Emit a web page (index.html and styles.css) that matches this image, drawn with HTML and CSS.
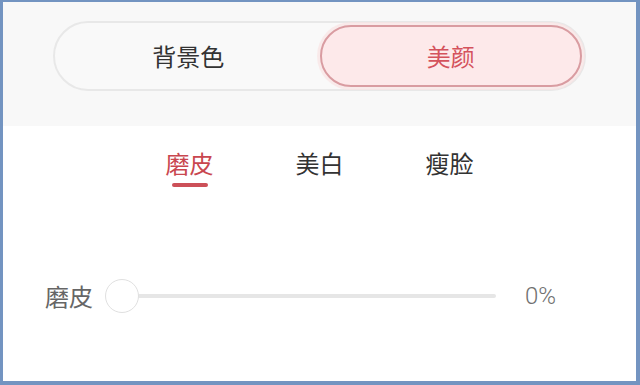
FILE: index.html
```html
<!DOCTYPE html>
<html lang="zh-CN">
<head>
<meta charset="utf-8">
<link rel="stylesheet" href="styles.css">
</head>
<body>
<div class="frame">
  <div class="top">
    <div class="switch">
      <div class="seg">背景色</div>
      <div class="seg active">美颜</div>
    </div>
  </div>
  <div class="panel">
    <div class="tabs">
      <div class="tab selected"><span class="tab-label">磨皮</span><span class="bar"></span></div>
      <div class="tab"><span class="tab-label">美白</span></div>
      <div class="tab"><span class="tab-label">瘦脸</span></div>
    </div>
    <div class="slider-row">
      <span class="label">磨皮</span>
      <div class="slider">
        <div class="track"></div>
        <div class="thumb"></div>
      </div>
      <span class="value">0%</span>
    </div>
  </div>
</div>
</body>
</html>
```
FILE: styles.css
```css
html, body {
  margin: 0;
  padding: 0;
}
body {
  width: 640px;
  height: 385px;
  font-family: "Noto Sans CJK SC", "Noto Sans", sans-serif;
}
.frame {
  box-sizing: border-box;
  width: 640px;
  height: 385px;
  border-style: solid;
  border-color: #7394c1;
  border-width: 2px 4px 4px 3px;
  background: #ffffff;
  display: flex;
  flex-direction: column;
}
.top {
  background: #f8f8f8;
  height: 124px;
  box-sizing: border-box;
  padding-top: 19px;
  display: flex;
  justify-content: center;
}
.switch {
  box-sizing: border-box;
  width: 533px;
  height: 70px;
  border: 2px solid #e8e8e8;
  border-radius: 35px;
  padding: 2px;
  display: grid;
  grid-template-columns: 1fr 1fr;
  background: #f9f9f9;
}
.seg {
  display: flex;
  align-items: center;
  justify-content: center;
  font-size: 24px;
  color: #333333;
  border-radius: 32px;
  line-height: 1;
}
.seg.active {
  background: #fde9ea;
  border: 2px solid #d99ca1;
  color: #d4525c;
  box-shadow: 0 0 0 3px rgba(250, 228, 228, 0.7);
}
.panel {
  flex: 1;
  display: flex;
  flex-direction: column;
}
.tabs {
  display: flex;
  justify-content: center;
  padding-top: 20px;
}
.tab {
  width: 130px;
  display: flex;
  flex-direction: column;
  align-items: center;
}
.tab-label {
  font-size: 24px;
  line-height: 34px;
  color: #333333;
}
.tab.selected .tab-label {
  color: #c9474f;
}
.bar {
  margin-top: 3px;
  width: 36px;
  height: 4px;
  border-radius: 2px;
  background: #cc5058;
}
.slider-row {
  margin-top: 92px;
  display: flex;
  align-items: center;
  padding-left: 42px;
  height: 34px;
}
.label {
  font-size: 24px;
  line-height: 34px;
  color: #666666;
  width: 48px;
  margin-right: 12px;
}
.slider {
  position: relative;
  width: 391px;
  height: 34px;
  display: flex;
  align-items: center;
}
.track {
  flex: 1;
  height: 4px;
  margin-left: 17px;
  border-radius: 2px;
  background: #e6e6e6;
}
.thumb {
  position: absolute;
  left: 0;
  top: 0;
  box-sizing: border-box;
  width: 34px;
  height: 34px;
  border-radius: 50%;
  border: 1.5px solid #e0e0e0;
  background: #ffffff;
}
.value {
  margin-left: 29px;
  font-family: Roboto, "Noto Sans", sans-serif;
  font-weight: 300;
  font-size: 24px;
  line-height: 34px;
  color: #707070;
}
```
